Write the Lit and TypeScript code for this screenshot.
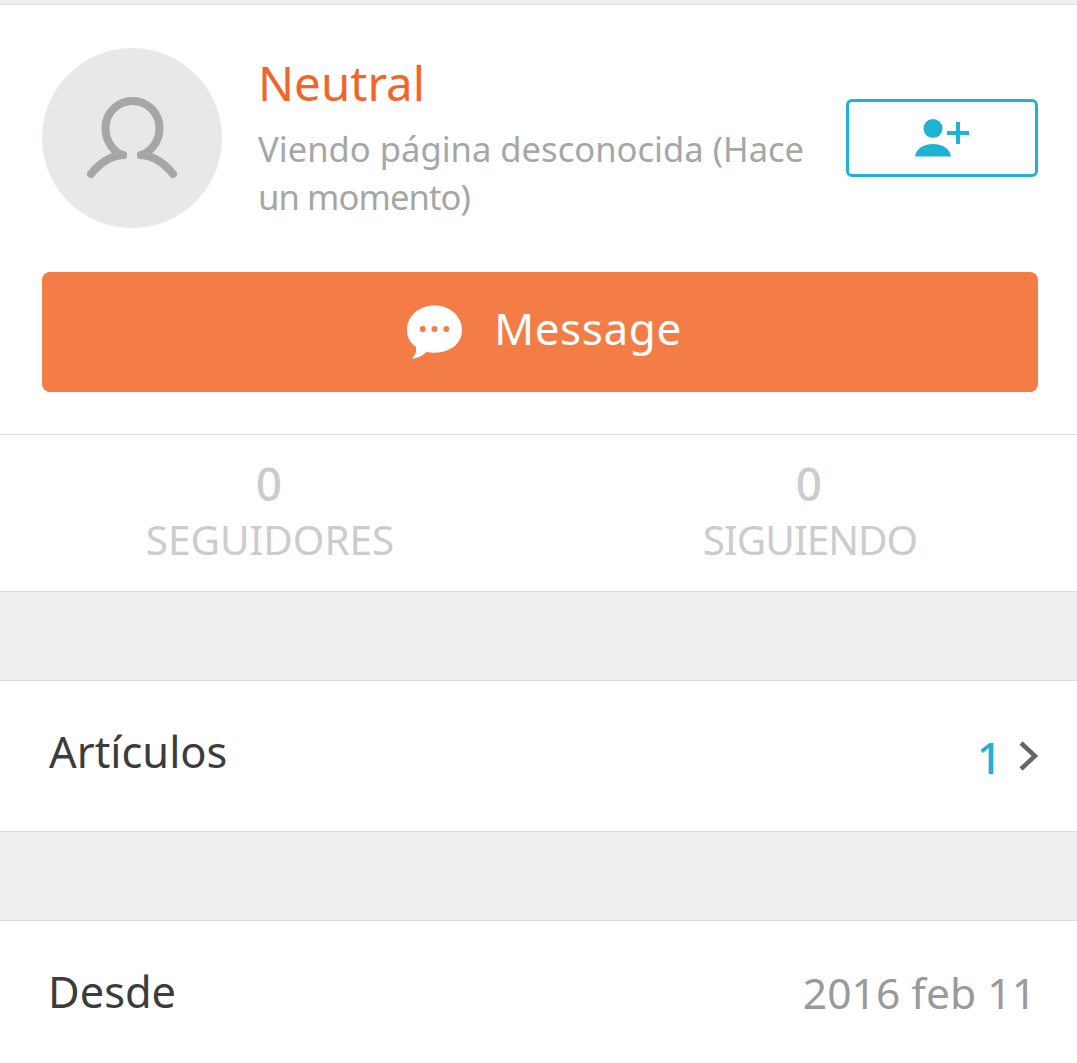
import { LitElement, html, css } from "lit";
import { customElement } from "lit/decorators.js";

@customElement("app-root")
export class AppRoot extends LitElement {
  static styles = css`
    :host { display: block; width: 1077px; height: 1063px; overflow: hidden; background: #fff; font-family: "Noto Sans", "Open Sans", sans-serif; }
    .top { height: 4px; background: #efefef; border-bottom: 1px solid #dcdcdc; }
    .profile { padding: 43px 39px 42px 42px; border-bottom: 1px solid #dedede; }
    .head { display: flex; align-items: flex-start; }
    .avatar { width: 180px; height: 180px; border-radius: 50%; background: #e7e8e8; display: flex; align-items: center; justify-content: center; flex: none; }
    .info { margin-left: 36px; width: 556px; flex: none; }
    .name { font-size: 47.5px; line-height: 60px; color: #f26529; margin-top: 5px; }
    .status { font-size: 34.6px; line-height: 48px; color: #a5a7a6; margin-top: 12px; }
    .tight { letter-spacing: -0.9px; }
    .follow { box-sizing: border-box; width: 192px; height: 78px; margin: 51px 0 0 auto; border: 3px solid #1fb3d3; border-radius: 6px; display: flex; align-items: center; justify-content: center; background: #fff; }
    .msg { margin-top: 44px; height: 120px; box-sizing: border-box; padding-left: 9px; border-radius: 8px; background: #f47c47; display: flex; align-items: center; justify-content: center; gap: 32px; color: #fff; font-size: 44px; letter-spacing: 0.6px; }
    .msg span { margin-bottom: 8px; }
    .stats { display: grid; grid-template-columns: 540px 540px; height: 156px; border-bottom: 1px solid #dedede; text-align: center; color: #cccccc; }
    .num { font-size: 46px; font-weight: 500; line-height: 60px; margin-top: 18px; margin-right: 2px; }
    .lab { font-size: 40.5px; line-height: 52px; margin-top: 1px; }
    .lab.narrow { letter-spacing: -1px; }
    .gap { height: 88px; background: #efefef; border-bottom: 1px solid #dedede; }
    .row { height: 150px; display: flex; align-items: center; border-bottom: 1px solid #dedede; padding: 0 39px 0 49px; font-size: 43.4px; color: #3c3c3c; }
    .row.last { border-bottom: none; }
    .row > .label { margin-bottom: 10px; }
    .row.last > .label { margin-left: -1px; margin-bottom: 9px; }
    .right { margin-left: auto; display: flex; align-items: center; }
    .count { color: #1fb3d3; font-size: 44px; font-weight: 500; margin-right: 16px; margin-top: 2px; }
    .date { margin-left: auto; color: #999a99; font-size: 42.6px; margin-right: 2px; margin-bottom: 9px; }
  `;
  render() {
    return html`
      <div class="top"></div>
      <div class="profile">
        <div class="head">
          <div class="avatar">
            <svg width="92" height="84" viewBox="0 0 92 84" fill="none" stroke="#a5a7a5" stroke-width="8" stroke-linecap="round" stroke-linejoin="round">
              <path d="M37 59 C30 57 19.5 48 19.5 32 A27 27 0 0 1 73.5 32 C73.5 48 62 57 55 59"/>
              <path d="M37 59 C24 60 13 68 5 78"/>
              <path d="M55 59 C68 60 79 68 87 78"/>
            </svg>
          </div>
          <div class="info">
            <div class="name">Neutral</div>
            <div class="status">Viendo página desconocida (Hace <span class="tight">un momento)</span></div>
          </div>
          <div class="follow">
            <svg width="56" height="38" viewBox="0 0 56 38" fill="#1fb3d3">
              <circle cx="19" cy="9.5" r="9.5"/>
              <path d="M1 37.5 C2 30 9 25 19 25 C29 25 36 30 37 37.5 Z"/>
              <path d="M33 12 H55 V16 H33 Z M42 3 H46 V25 H42 Z"/>
            </svg>
          </div>
        </div>
        <div class="msg">
          <svg width="55" height="54" viewBox="0 0 56 54">
            <path fill="#fff" d="M28 0 C44 0 56 11 56 25 C56 39 44 48 28 48 C25 48 22 48 20 47 C16 51 10 54 5 54 C9 50 10 46 9 42 C3 38 0 32 0 25 C0 11 12 0 28 0 Z"/>
            <circle cx="16" cy="24" r="3" fill="#f47c47"/><circle cx="28" cy="24" r="3" fill="#f47c47"/><circle cx="40" cy="24" r="3" fill="#f47c47"/>
          </svg>
          <span>Message</span>
        </div>
      </div>
      <div class="stats">
        <div><div class="num">0</div><div class="lab">SEGUIDORES</div></div>
        <div><div class="num">0</div><div class="lab narrow">SIGUIENDO</div></div>
      </div>
      <div class="gap"></div>
      <div class="row">
        <span class="label">Artículos</span>
        <div class="right">
          <span class="count">1</span>
          <svg width="20" height="32" viewBox="0 0 20 32" fill="none" stroke="#666" stroke-width="4.5"><path d="M3 3 L17 16 L3 29"/></svg>
        </div>
      </div>
      <div class="gap"></div>
      <div class="row last">
        <span class="label">Desde</span>
        <span class="date">2016 feb 11</span>
      </div>
    `;
  }
}
